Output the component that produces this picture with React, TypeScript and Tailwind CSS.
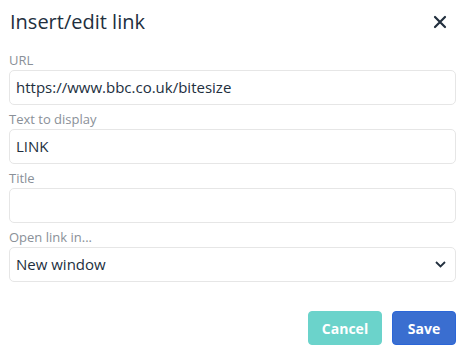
import { ReactNode } from 'react';

function Field({ label, children }: { label: string; children: ReactNode }) {
  return (
    <div className="flex flex-col">
      <label className="h-[16px] text-[13px] leading-[16px] text-[#8a9098] mb-[2px]">{label}</label>
      {children}
    </div>
  );
}

function TextInput({ value }: { value: string }) {
  return (
    <div className="h-[35px] rounded-[5px] border border-[#e6e6e6] bg-white px-[6px] flex items-center text-[15px] text-[#222f3e]">
      {value}
    </div>
  );
}

export default function App() {
  return (
    <div
      className="w-[468px] h-[350px] bg-white pl-[9px] pr-[12px] overflow-hidden"
      style={{ fontFamily: '"Open Sans", "Noto Sans", sans-serif' }}
    >
      {/* header */}
      <div className="h-[42px] flex items-center justify-between pt-[2px]">
        <h1 className="text-[20px] text-[#222f3e] leading-none pl-px">Insert/edit link</h1>
        <button className="w-[24px] h-[24px] flex items-center justify-center mr-[4px]">
          <svg width="14" height="14" viewBox="0 0 14 14">
            <path d="M2 2 L12 12 M12 2 L2 12" stroke="#222f3e" strokeWidth="2.2" strokeLinecap="round" />
          </svg>
        </button>
      </div>

      <div className="flex flex-col gap-[6px] mt-[10px]">
        <Field label="URL">
          <TextInput value="https://www.bbc.co.uk/bitesize" />
        </Field>
        <Field label="Text to display">
          <TextInput value="LINK" />
        </Field>
        <Field label="Title">
          <TextInput value="" />
        </Field>
        <Field label="Open link in...">
          <div className="h-[35px] rounded-[5px] border border-[#e6e6e6] bg-white pl-[6px] pr-[9px] flex items-center justify-between text-[15px] text-[#222f3e]">
            <span>New window</span>
            <svg width="11" height="7" viewBox="0 0 11 7">
              <path d="M1 1 L5.5 5.5 L10 1" fill="none" stroke="#222f3e" strokeWidth="1.8" />
            </svg>
          </div>
        </Field>
      </div>

      {/* footer */}
      <div className="flex justify-end gap-[10px] mt-[29px]">
        <button className="w-[74px] h-[34px] rounded-[4px] bg-[#6bd3cb] border border-[#6bd3cb] text-white font-bold text-[14px]">
          Cancel
        </button>
        <button className="w-[64px] h-[34px] rounded-[4px] bg-[#3a6ed0] border border-[#2b66d8] text-white font-bold text-[14px]">
          Save
        </button>
      </div>
    </div>
  );
}
